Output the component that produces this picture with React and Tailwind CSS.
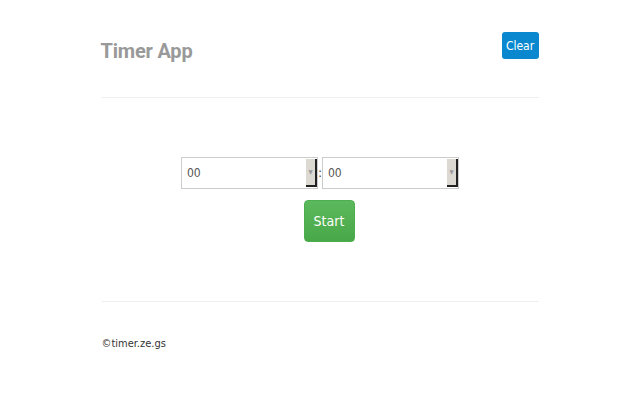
import React from 'react'

function Select({ value }) {
  return (
    <div className="flex h-[32px] w-[137px] border border-[#ccc] bg-white">
      <div className="flex flex-1 items-center pl-[5px] text-[12px] text-[#555]">{value}</div>
      <div className="my-[1px] flex w-[11px] items-center justify-center border-b-2 border-r-2 border-b-[#222] border-r-[#222] bg-[#dcd9d3]">
        <span className="text-[6px] leading-none text-[#999]">▼</span>
      </div>
    </div>
  )
}

export default function App() {
  return (
    <div className="min-h-[400px] bg-white font-['DejaVu_Sans_Condensed','DejaVu_Sans',sans-serif] text-[#333]">
      <div className="mx-auto w-[437px]">
        {/* header */}
        <div className="flex h-[59px] items-end justify-between">
          <h1 className="-mb-[2px] -ml-[1px] font-['Roboto',sans-serif] text-[20px] font-bold leading-none tracking-[-0.2px] text-[#999]">
            Timer App
          </h1>
          <button className="h-[27px] w-[37px] rounded-[3px] bg-[#0a88cf] text-[12px] text-white">Clear</button>
        </div>
        <div className="mt-[38px] h-px bg-[#eee]" />

        {/* timer */}
        <div className="flex flex-col items-center pt-[59px]">
          <div className="flex items-center">
            <Select value="00" />
            <span className="w-[4px] text-center text-[12px] leading-none">:</span>
            <Select value="00" />
          </div>
          <button className="ml-[18px] mt-[11px] h-[42px] w-[51px] rounded-[4px] border border-[#4cae4c] bg-gradient-to-b from-[#5cb85c] to-[#48a848] text-[14px] text-white">
            Start
          </button>
        </div>
        <div className="mt-[59px] h-px bg-[#eee]" />

        {/* footer */}
        <p className="pt-[34px] text-[11px] text-[#333]">©timer.ze.gs</p>
      </div>
    </div>
  )
}
